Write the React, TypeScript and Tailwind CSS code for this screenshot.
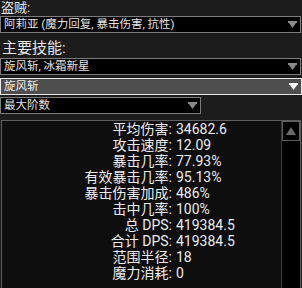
const stats: [string, string][] = [
  ["平均伤害:", "34682.6"],
  ["攻击速度:", "12.09"],
  ["暴击几率:", "77.93%"],
  ["有效暴击几率:", "95.13%"],
  ["暴击伤害加成:", "486%"],
  ["击中几率:", "100%"],
  ["总 DPS:", "419384.5"],
  ["合计 DPS:", "419384.5"],
  ["范围半径:", "18"],
  ["魔力消耗:", "0"],
];

const Arrow = ({ color }: { color: string }) => (
  <svg width="9" height="7" viewBox="0 0 9 7" className="shrink-0">
    <rect x="0" y="0" width="9" height="2" fill={color} />
    <polygon points="1,2 8,2 4.5,7" fill={color} />
  </svg>
);

const Select = ({
  label,
  active,
  className = "",
}: {
  label: string;
  active?: boolean;
  className?: string;
}) => (
  <div
    className={`flex h-[17px] items-center justify-between border pl-[3px] pr-[3px] text-[11.5px] leading-none ${
      active ? "border-[#e8e8e8] bg-[#4e4e4e] text-[#f0f0f0]" : "border-[#7c7c7c] bg-black text-[#e4e4e4]"
    } ${className}`}
  >
    <span className="whitespace-nowrap">{label}</span>
    <Arrow color={active ? "#ffffff" : "#8a8a8a"} />
  </div>
);

export default function App() {
  return (
    <div
      className="h-[288px] w-[302px] overflow-hidden bg-[#1c1c1c] text-[#e6e6e6]"
      style={{ fontFamily: 'Roboto, "Noto Sans CJK SC", sans-serif' }}
    >
      <div className="h-[16px] pl-[1px] text-[13px] leading-[16px]">盗贼:</div>
      <Select label="阿莉亚 (魔力回复, 暴击伤害, 抗性)" className="mr-[1px]" />
      <div className="h-[25px] pl-[2px] pt-[5px] text-[15px] leading-[20px]">主要技能:</div>
      <Select label="旋风斩, 冰霜新星" className="mr-[1px]" />
      <div className="h-[3px]" />
      <Select label="旋风斩" active />
      <div className="h-[2px]" />
      <Select label="最大阶数" className="w-[201px]" />
      <div className="h-[6px]" />
      <div className="ml-[1px] mr-[1px] flex h-[180px] border border-[#5e5e5e] bg-[#0e0e0e]">
        <div className="flex-1 text-[14px] leading-[16px] text-[#ececec]">
          {stats.map(([k, v]) => (
            <div key={k} className="flex whitespace-nowrap">
              <span className="w-[170px] text-right">{k}</span>
              <span className="ml-[4px]">{v}</span>
            </div>
          ))}
        </div>
        <div className="w-[19px] border-l border-[#3a3a3a] bg-black">
          <div className="flex h-[20px] items-center justify-center border border-[#5e5e5e]">
            <svg width="10" height="8" viewBox="0 0 10 8">
              <polygon points="5,0 10,8 0,8" fill="#6a6a6a" />
            </svg>
          </div>
        </div>
      </div>
    </div>
  );
}
